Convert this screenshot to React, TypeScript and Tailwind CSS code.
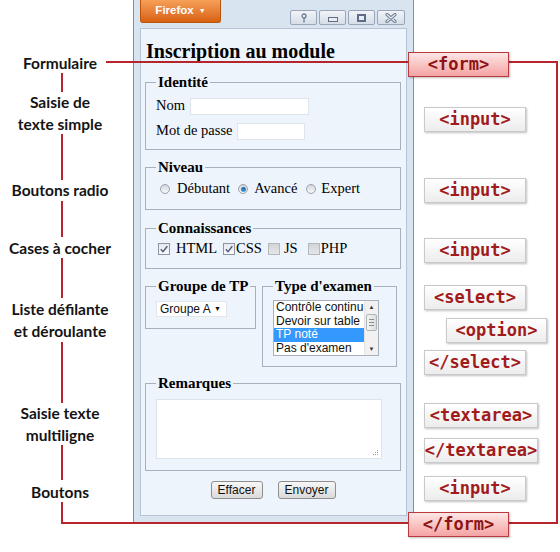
import React from "react";

const tagBase =
  "absolute h-[25px] flex items-center justify-center border border-[#c9c9c9] bg-gradient-to-b from-[#ffffff] to-[#ececec] shadow-[1px_1px_2px_rgba(0,0,0,0.25)] text-[#a11b1b] font-bold text-[17px] font-['DejaVu_Sans_Mono',monospace] leading-none";
const formTag =
  "absolute h-[25px] flex items-center justify-center border border-[#b9393c] bg-gradient-to-b from-[#fde6e6] to-[#f3a3a3] shadow-[1px_1px_2px_rgba(0,0,0,0.25)] text-[#8c1414] font-bold text-[17px] font-['DejaVu_Sans_Mono',monospace] leading-none";
const label =
  "absolute left-0 w-[120px] text-center font-['Lato',sans-serif] font-bold text-[15.5px] leading-[22px] text-[#141414]";
const red = "absolute bg-[#b5252b]";
const fs = "border border-[#a7b0bb] pl-[10px] pr-[6px]";
const legend = "px-[2px] font-bold text-[15px] leading-[17px] text-black whitespace-nowrap";

function Radio({ checked }: { checked?: boolean }) {
  return (
    <span className="w-[10px] h-[10px] rounded-full border border-[#9ba2ab] bg-gradient-to-b from-[#d3d7dc] to-[#f7f8f9] flex items-center justify-center shrink-0">
      {checked && <span className="w-[5px] h-[5px] rounded-full bg-gradient-to-b from-[#1c5f9e] to-[#49a3e0]" />}
    </span>
  );
}

function Check({ checked }: { checked?: boolean }) {
  return (
    <span
      className={
        checked
          ? "w-[12px] h-[12px] border border-[#8e96a2] bg-gradient-to-b from-[#e6e9ef] to-[#f8f9fb] flex items-center justify-center shrink-0"
          : "w-[12px] h-[12px] border border-[#b3b8be] bg-gradient-to-b from-[#d2d4d7] to-[#e6e7e9] shrink-0"
      }
    >
      {checked && (
        <svg width="10" height="10" viewBox="0 0 10 10">
          <path d="M1.8 5.2 L4 7.6 L8.3 2.2" stroke="#4c5c7c" strokeWidth="1.4" fill="none" />
        </svg>
      )}
    </span>
  );
}

function WinBtn({ children, w }: { children: React.ReactNode; w: string }) {
  return (
    <div
      className={
        w +
        " h-[15px] border border-[#9aa6b7] rounded-[2px] bg-gradient-to-b from-[#f1f4f8] to-[#d6dee9] flex items-center justify-center"
      }
    >
      {children}
    </div>
  );
}

export default function App() {
  return (
    <div className="relative w-[560px] h-[552px] overflow-hidden bg-white">
      {/* Browser window */}
      <div className="ml-[133px] w-[281px] h-[523px] flex flex-col border-x border-b border-[#7f8fa6] bg-[#d9e4f1]">
        <div className="h-[28px] shrink-0 flex items-start px-[6px]">
          <div className="w-[81px] h-[23px] rounded-b-[3px] border border-t-0 border-[#b9540c] bg-gradient-to-b from-[#f6a057] to-[#d8600d] flex items-center justify-center gap-[5px] text-white font-bold text-[11.5px] font-['Liberation_Sans',sans-serif]">
            <span>Firefox</span>
            <span className="text-[7px]">▼</span>
          </div>
          <div className="ml-auto mr-[2px] mt-[10px] flex gap-[2px]">
            <WinBtn w="w-[27px]">
              <svg width="8" height="10" viewBox="0 0 8 10">
                <circle cx="4" cy="3" r="2" fill="none" stroke="#6d7c91" strokeWidth="1.3" />
                <path d="M4 5 V9.5" stroke="#6d7c91" strokeWidth="1.3" />
              </svg>
            </WinBtn>
            <WinBtn w="w-[27px]">
              <div className="w-[10px] h-[5px] mt-[4px] border border-[#5f6e84] bg-[#e8edf3]" />
            </WinBtn>
            <WinBtn w="w-[27px]">
              <div className="w-[9px] h-[8px] border-2 border-[#5f6e84] bg-[#e8edf3]" />
            </WinBtn>
            <WinBtn w="w-[28px]">
              <svg width="12" height="10" viewBox="0 0 12 10">
                <path d="M2 1.5 L10 8.5 M10 1.5 L2 8.5" stroke="#6b7a8f" strokeWidth="3.2" strokeLinecap="round" />
                <path d="M2 1.5 L10 8.5 M10 1.5 L2 8.5" stroke="#e9eef4" strokeWidth="1.2" strokeLinecap="round" />
              </svg>
            </WinBtn>
          </div>
        </div>

        <div className="flex-1 mx-[6px] mb-[6px] bg-[#eef4fb] border border-[#b7c4d5] pl-[4px] pr-[5px] flex flex-col font-['Liberation_Serif',serif] text-[14.5px] text-black">
          <h1 className="mt-[11px] pl-[1px] text-[20px] leading-[22px] font-bold">Inscription au module</h1>

          {/* Identité */}
          <fieldset className={fs + " mt-[12px] pb-[9px]"}>
            <legend className={legend}>Identité</legend>
            <div className="mt-[6px] h-[18px] flex items-center gap-[5px]">
              <span>Nom</span>
              <span className="w-[119px] h-[17px] bg-white border border-[#dfe4ea]" />
            </div>
            <div className="mt-[7px] h-[18px] flex items-center gap-[4px]">
              <span>Mot de passe</span>
              <span className="w-[68px] h-[17px] bg-white border border-[#dfe4ea]" />
            </div>
          </fieldset>

          {/* Niveau */}
          <fieldset className={fs + " mt-[9px] pb-[11px]"}>
            <legend className={legend}>Niveau</legend>
            <div className="mt-[4px] h-[18px] flex items-center pl-[4px]">
              <Radio />
              <span className="ml-[7px] mr-[8px]">Débutant</span>
              <Radio checked />
              <span className="ml-[6px] mr-[9px]">Avancé</span>
              <Radio />
              <span className="ml-[5px]">Expert</span>
            </div>
          </fieldset>

          {/* Connaissances */}
          <fieldset className={fs + " mt-[10px] pb-[10px]"}>
            <legend className={legend}>Connaissances</legend>
            <div className="mt-[3px] h-[18px] flex items-center pl-[2px]">
              <Check checked />
              <span className="ml-[6px] mr-[6px]">HTML</span>
              <Check checked />
              <span className="ml-[1px] mr-[6px]">CSS</span>
              <Check />
              <span className="ml-[4px] mr-[10px]">JS</span>
              <Check />
              <span className="ml-[1px]">PHP</span>
            </div>
          </fieldset>

          {/* Groupe / Type */}
          <div className="mt-[9px] flex items-start gap-[6px]">
            <fieldset className="border border-[#a7b0bb] pl-[10px] pr-[2px] w-[111px] pb-[11px]">
              <legend className={legend}>Groupe de TP</legend>
              <div className="mt-[6px] w-[71px] h-[16px] bg-white border border-[#e3e7ec] flex items-center pl-[3px] pr-[5px] font-['Liberation_Sans',sans-serif] text-[12px] text-[#111]">
                <span>Groupe A</span>
                <span className="ml-auto text-[7px]">▼</span>
              </div>
            </fieldset>
            <fieldset className="border border-[#a7b0bb] pl-[10px] pr-[2px] w-[135px] pb-[10px]">
              <legend className={legend}>Type d'examen</legend>
              <div className="mt-[5px] w-[106px] h-[56px] bg-white border border-[#a9b0b9] flex font-['Liberation_Sans',sans-serif] text-[12px] text-[#111] overflow-hidden">
                <div className="flex-1 flex flex-col overflow-hidden whitespace-nowrap">
                  <div className="h-[13.5px] leading-[13.5px] pl-[2px]">Contrôle continu</div>
                  <div className="h-[13.5px] leading-[13.5px] pl-[2px]">Devoir sur table</div>
                  <div className="h-[13.5px] leading-[13.5px] pl-[2px] bg-[#3399ff] text-white">TP noté</div>
                  <div className="h-[13.5px] leading-[13.5px] pl-[2px]">Pas d'examen</div>
                </div>
                <div className="w-[14px] shrink-0 bg-[#f1f1f1] border-l border-[#e2e2e2] flex flex-col items-center">
                  <div className="h-[13px] flex items-center justify-center text-[6px] text-[#333]">▲</div>
                  <div className="w-[11px] h-[17px] border border-[#b0b4ba] rounded-[2px] bg-gradient-to-r from-[#f5f5f5] to-[#dcdcdc] flex flex-col items-center justify-center gap-[2px]">
                    <span className="w-[5px] h-px bg-[#8b8f95]" />
                    <span className="w-[5px] h-px bg-[#8b8f95]" />
                    <span className="w-[5px] h-px bg-[#8b8f95]" />
                  </div>
                  <div className="flex-1" />
                  <div className="h-[12px] flex items-center justify-center text-[6px] text-[#333]">▼</div>
                </div>
              </div>
            </fieldset>
          </div>

          {/* Remarques */}
          <fieldset className={fs + " mt-[8px] pb-[11px]"}>
            <legend className={legend}>Remarques</legend>
            <div className="relative mt-[7px] w-[226px] h-[60px] bg-white border border-[#dde3ea]">
              <svg className="absolute right-[2px] bottom-[2px]" width="7" height="7" viewBox="0 0 7 7">
                <rect x="5" y="1" width="1" height="1" fill="#9a9a9a" />
                <rect x="3" y="3" width="1" height="1" fill="#9a9a9a" />
                <rect x="5" y="3" width="1" height="1" fill="#9a9a9a" />
                <rect x="1" y="5" width="1" height="1" fill="#9a9a9a" />
                <rect x="3" y="5" width="1" height="1" fill="#9a9a9a" />
                <rect x="5" y="5" width="1" height="1" fill="#9a9a9a" />
              </svg>
            </div>
          </fieldset>

          <div className="mt-[10px] flex justify-center gap-[15px] font-['Liberation_Sans',sans-serif] text-[12px] text-[#111]">
            <div className="w-[52px] h-[18px] border border-[#8e8e8e] rounded-[3px] bg-gradient-to-b from-[#f7f7f7] to-[#dadada] flex items-center justify-center">Effacer</div>
            <div className="w-[58px] h-[18px] border border-[#8e8e8e] rounded-[3px] bg-gradient-to-b from-[#f7f7f7] to-[#dadada] flex items-center justify-center">Envoyer</div>
          </div>
        </div>
      </div>

      {/* Red connector lines */}
      <div className={red + " left-[106px] top-[61px] w-[302px] h-[2px]"} />
      <div className={red + " left-[509px] top-[61px] w-[49px] h-[2px]"} />
      <div className={red + " left-[556px] top-[61px] w-[2px] h-[463px]"} />
      <div className={red + " left-[509px] top-[522px] w-[49px] h-[2px]"} />
      <div className={red + " left-[61px] top-[522px] w-[347px] h-[2px]"} />
      <div className={red + " left-[61px] top-[73px] w-[2px] h-[19px]"} />
      <div className={red + " left-[61px] top-[134px] w-[2px] h-[46px]"} />
      <div className={red + " left-[61px] top-[201px] w-[2px] h-[36px]"} />
      <div className={red + " left-[61px] top-[258px] w-[2px] h-[40px]"} />
      <div className={red + " left-[61px] top-[342px] w-[2px] h-[61px]"} />
      <div className={red + " left-[61px] top-[445px] w-[2px] h-[35px]"} />
      <div className={red + " left-[61px] top-[502px] w-[2px] h-[22px]"} />

      {/* Left labels */}
      <div className={label + " top-[52px]"}>Formulaire</div>
      <div className={label + " top-[91px]"}>
        Saisie de
        <br />
        texte simple
      </div>
      <div className={label + " top-[179px]"}>Boutons radio</div>
      <div className={label + " top-[237px]"}>Cases à cocher</div>
      <div className={label + " top-[298px]"}>
        Liste défilante
        <br />
        et déroulante
      </div>
      <div className={label + " top-[402px]"}>
        Saisie texte
        <br />
        multiligne
      </div>
      <div className={label + " top-[481px]"}>Boutons</div>

      {/* Right tags */}
      <div className={formTag + " left-[408px] top-[52px] w-[101px]"}>&lt;form&gt;</div>
      <div className={tagBase + " left-[424px] top-[107px] w-[102px]"}>&lt;input&gt;</div>
      <div className={tagBase + " left-[424px] top-[178px] w-[102px]"}>&lt;input&gt;</div>
      <div className={tagBase + " left-[424px] top-[238px] w-[102px]"}>&lt;input&gt;</div>
      <div className={tagBase + " left-[424px] top-[285px] w-[102px]"}>&lt;select&gt;</div>
      <div className={tagBase + " left-[446px] top-[318px] w-[101px]"}>&lt;option&gt;</div>
      <div className={tagBase + " left-[424px] top-[350px] w-[102px]"}>&lt;/select&gt;</div>
      <div className={tagBase + " left-[424px] top-[403px] w-[114px]"}>&lt;textarea&gt;</div>
      <div className={tagBase + " left-[424px] top-[438px] w-[114px]"}>&lt;/textarea&gt;</div>
      <div className={tagBase + " left-[424px] top-[476px] w-[102px]"}>&lt;input&gt;</div>
      <div className={formTag + " left-[408px] top-[512px] w-[101px]"}>&lt;/form&gt;</div>
    </div>
  );
}
